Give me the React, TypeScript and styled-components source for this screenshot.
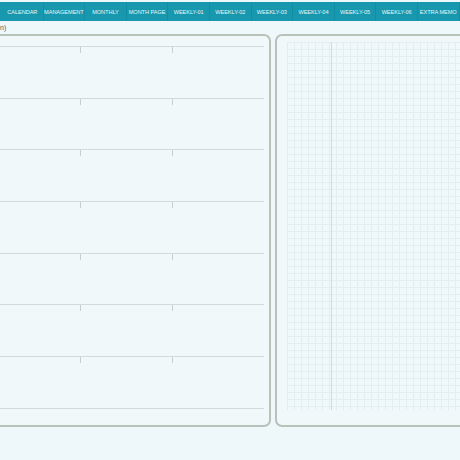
import React from 'react';
import styled, { createGlobalStyle } from 'styled-components';

const GlobalStyle = createGlobalStyle`
  html, body {
    margin: 0;
    padding: 0;
    background: #eef8fa;
    overflow: hidden;
    font-family: "Liberation Sans", Arial, sans-serif;
  }
`;

const Page = styled.div`
  width: 460px;
  height: 460px;
  overflow: hidden;
  display: flex;
  flex-direction: column;
`;

const TabBar = styled.nav`
  margin-top: 2px;
  height: 19px;
  background: #1798ae;
  display: flex;
  padding-left: 2px;
`;

const Tab = styled.div`
  flex: 0 0 41.6px;
  display: flex;
  align-items: center;
  justify-content: center;
  border-right: 1px solid #138da2;
  box-sizing: border-box;
  color: #e6f5f7;
  font-size: 5.6px;
  letter-spacing: -0.05px;
  white-space: nowrap;
  text-transform: uppercase;
`;

const SubRow = styled.div`
  height: 12px;
  display: flex;
  align-items: center;
  font-size: 7px;
  color: #5a5a5a;
`;

const Panels = styled.div`
  display: flex;
  gap: 4px;
  margin-left: -12px;
  margin-top: 1px;
  height: 393px;
`;

const Panel = styled.section<{ $width: number }>`
  flex: 0 0 ${p => p.$width}px;
  box-sizing: border-box;
  border: 2px solid #b7c2ba;
  border-radius: 7px;
  background: #f0f8fa;
`;

const LeftPanel = styled(Panel)`
  padding: 10px 5px 0 0;
`;

const Row = styled.div`
  height: 51.7px;
  display: grid;
  grid-template-columns: 90px 92px 1fr;
  border-top: 1px solid #d2dbdc;
  box-sizing: border-box;
`;

const Cell = styled.div<{ $tick?: boolean }>`
  height: 6px;
  border-left: ${p => (p.$tick ? '1px solid #c7d0d1' : 'none')};
`;

const RightPanel = styled(Panel)`
  padding: 6px 0 15px 10px;
  display: flex;
`;

const GridArea = styled.div`
  flex: 1;
  display: flex;
  background-color: #eff8fa;
  background-image:
    repeating-linear-gradient(to right, #e4eef0 0 1px, transparent 1px 7px),
    repeating-linear-gradient(to bottom, #e4eef0 0 1px, transparent 1px 7px);
`;

const IndexColumn = styled.div`
  flex: 0 0 44px;
  border-right: 1.5px solid #d0d9db;
`;

const tabs = [
  'CALENDAR',
  'MANAGEMENT',
  'MONTHLY',
  'MONTH PAGE',
  'WEEKLY-01',
  'WEEKLY-02',
  'WEEKLY-03',
  'WEEKLY-04',
  'WEEKLY-05',
  'WEEKLY-06',
  'EXTRA MEMO',
];

export default function App() {
  return (
    <Page>
      <GlobalStyle />
      <TabBar>
        {tabs.map(t => (
          <Tab key={t}>{t}</Tab>
        ))}
      </TabBar>
      <SubRow>n)</SubRow>
      <Panels>
        <LeftPanel $width={283}>
          {Array.from({ length: 8 }).map((_, i) => (
            <Row key={i}>
              <Cell />
              <Cell $tick={i < 7} />
              <Cell $tick={i < 7} />
            </Row>
          ))}
        </LeftPanel>
        <RightPanel $width={200}>
          <GridArea>
            <IndexColumn />
          </GridArea>
        </RightPanel>
      </Panels>
    </Page>
  );
}
